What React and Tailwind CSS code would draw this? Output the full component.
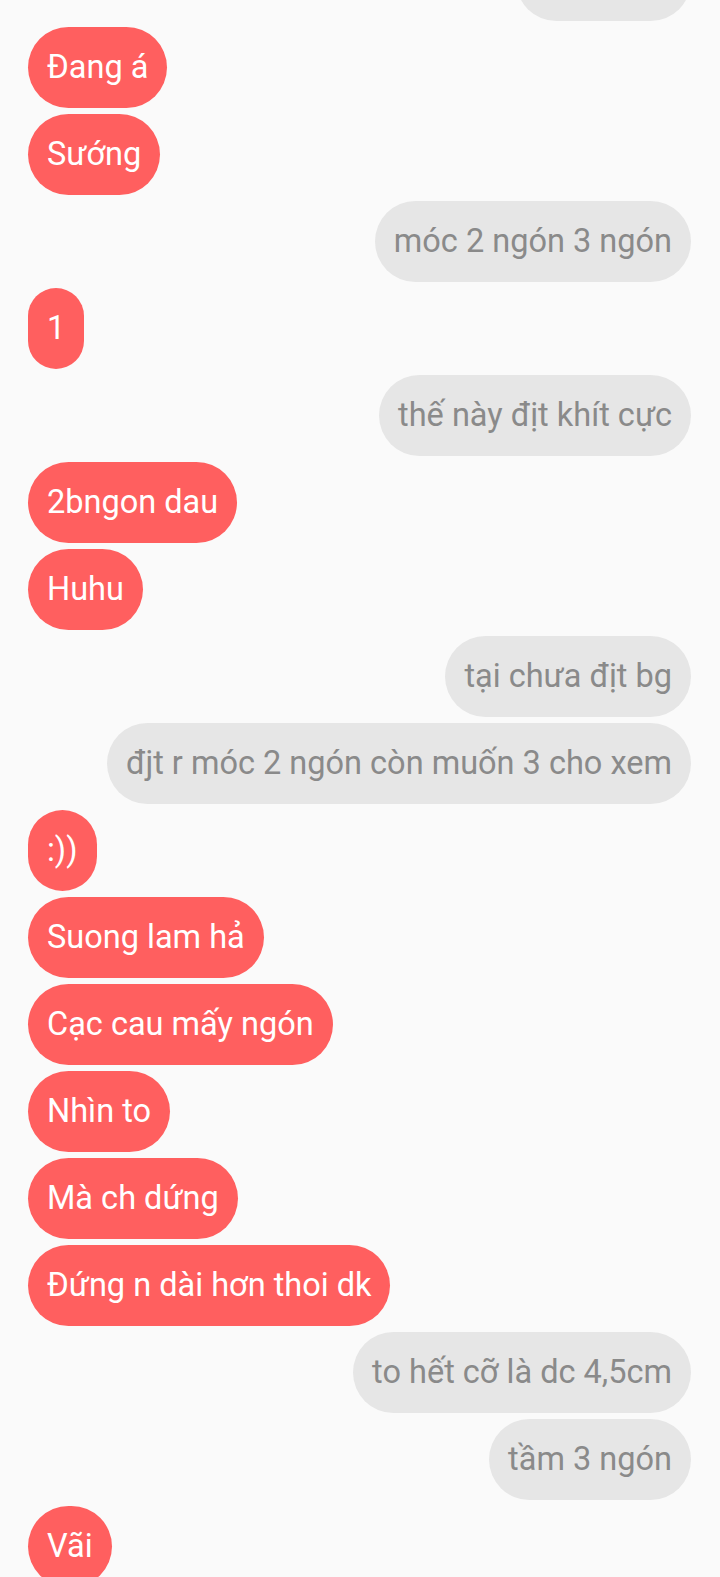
import React from "react";

const messages = [
  { me: true, text: "ok vậy đó" },
  { me: false, text: "Đang á" },
  { me: false, text: "Sướng" },
  { me: true, text: "móc 2 ngón 3 ngón" },
  { me: false, text: "1" },
  { me: true, text: "thế này địt khít cực" },
  { me: false, text: "2bngon dau" },
  { me: false, text: "Huhu" },
  { me: true, text: "tại chưa địt bg" },
  { me: true, text: "đjt r móc 2 ngón còn muốn 3 cho xem" },
  { me: false, text: ":))" },
  { me: false, text: "Suong lam hả" },
  { me: false, text: "Cạc cau mấy ngón" },
  { me: false, text: "Nhìn to" },
  { me: false, text: "Mà ch dứng" },
  { me: false, text: "Đứng n dài hơn thoi dk" },
  { me: true, text: "to hết cỡ là dc 4,5cm" },
  { me: true, text: "tầm 3 ngón" },
  { me: false, text: "Vãi" },
];

export default function App() {
  return (
    <div
      className="h-[1577px] w-[720px] overflow-hidden bg-[#FAFAFA]"
      style={{ fontFamily: "Roboto, 'Noto Sans', sans-serif" }}
    >
      <div className="-mt-[60px] flex flex-col gap-[6px] pl-[28px] pr-[29px]">
        {messages.map((m, i) => (
          <div
            key={i}
            className={
              m.me
                ? "self-end whitespace-nowrap rounded-full bg-[#E6E6E6] px-[19px] py-[22px] text-[32.5px] leading-[37px] text-[#8A8A8A]"
                : "self-start whitespace-nowrap rounded-full bg-[#FF5F5F] px-[19px] py-[22px] text-[32.5px] leading-[37px] text-white"
            }
          >
            {m.text}
          </div>
        ))}
      </div>
    </div>
  );
}
